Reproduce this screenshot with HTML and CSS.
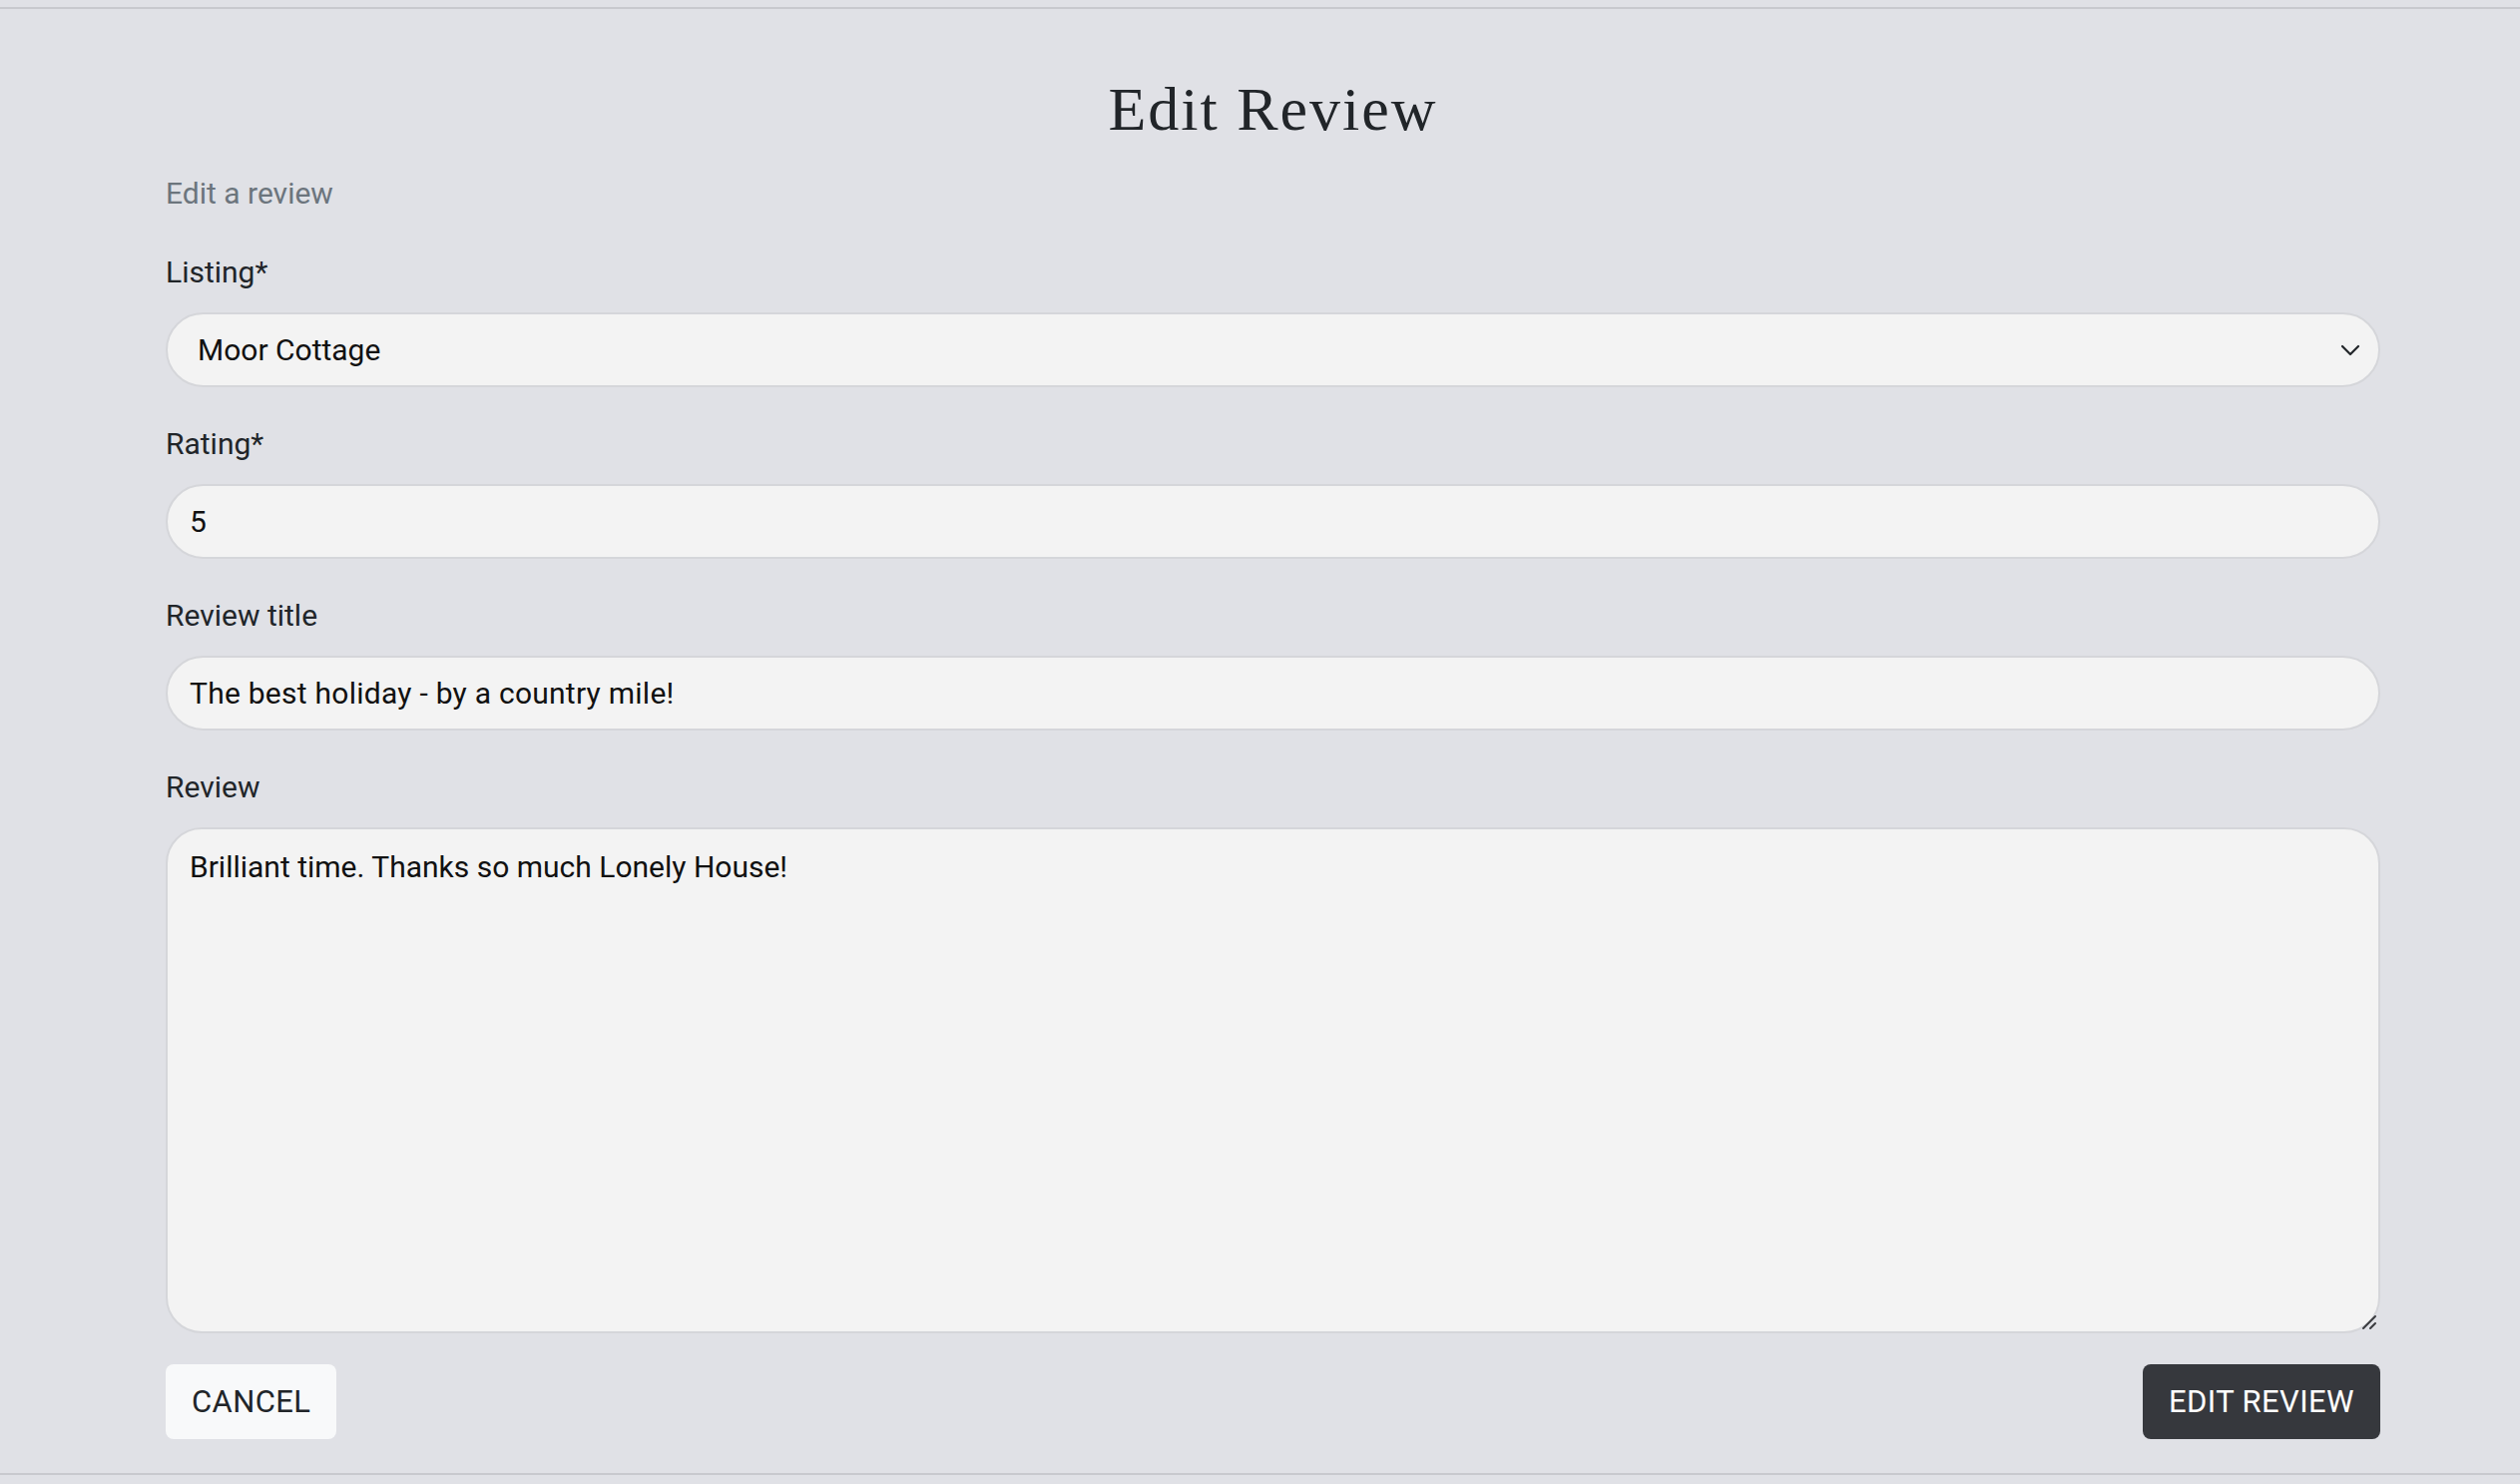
FILE: index.html
```html
<!DOCTYPE html>
<html lang="en">
<head>
<meta charset="utf-8">
<title>Edit Review</title>
<link rel="stylesheet" href="styles.css">
</head>
<body>
<div class="topbar"></div>
<main class="page">
  <h1 class="title">Edit Review</h1>
  <p class="lead">Edit a review</p>
  <form class="form">
    <div class="field">
      <label class="label" for="listing">Listing*</label>
      <div class="select-wrap">
        <select id="listing" class="control select">
          <option>Moor Cottage</option>
        </select>
        <svg class="chevron" width="20" height="12" viewBox="0 0 20 12"><path d="M2 2 L10 10 L18 2" fill="none" stroke="#212529" stroke-width="2.2" stroke-linecap="round" stroke-linejoin="round"/></svg>
      </div>
    </div>
    <div class="field">
      <label class="label" for="rating">Rating*</label>
      <input id="rating" class="control" type="text" value="5">
    </div>
    <div class="field">
      <label class="label" for="rtitle">Review title</label>
      <input id="rtitle" class="control" type="text" value="The best holiday - by a country mile!">
    </div>
    <div class="field">
      <label class="label" for="review">Review</label>
      <div class="area-wrap">
        <textarea id="review" class="control area">Brilliant time. Thanks so much Lonely House!</textarea>
        <svg class="grip" width="16" height="16" viewBox="0 0 16 16"><path d="M2 14 L14 2 M9 14 L14 9" fill="none" stroke="#3a3b3f" stroke-width="2" stroke-linecap="round"/></svg>
      </div>
    </div>
    <div class="actions">
      <button type="button" class="btn btn-light">CANCEL</button>
      <button type="submit" class="btn btn-dark">EDIT REVIEW</button>
    </div>
  </form>
</main>
<div class="bottombar"></div>
</body>
</html>
```

FILE: styles.css
```css
* { box-sizing: border-box; }
html, body { margin: 0; padding: 0; }
body {
  background: #e0e1e6;
  font-family: Roboto, "Noto Sans", sans-serif;
  color: #212529;
  height: 1487px;
  overflow: hidden;
}
.topbar {
  height: 9px;
  border-bottom: 2px solid #c8c9ce;
}
.page {
  width: 2219px;
  margin-left: 166px;
}
.title {
  margin: 0;
  padding-top: 65px;
  height: 162px;
  text-align: center;
  font-family: "Liberation Serif", "DejaVu Serif", serif;
  font-weight: 400;
  font-size: 62px;
  line-height: 70px;
  letter-spacing: 2px;
  color: #212529;
}
.lead {
  margin: 0;
  height: 78px;
  font-size: 30px;
  line-height: 46px;
  color: #6c757d;
  padding-top: 0;
}
.form { display: flex; flex-direction: column; }
.field {
  display: flex;
  flex-direction: column;
  margin-bottom: 33px;
}
.label {
  font-size: 30px;
  line-height: 48px;
  margin-bottom: 16px;
}
.control {
  display: block;
  width: 100%;
  height: 75px;
  background: #f3f3f3;
  border: 2px solid #d5d6da;
  border-radius: 40px;
  padding: 0 22px;
  font-family: inherit;
  font-size: 30px;
  color: #111;
  outline: none;
}
#rtitle { letter-spacing: 0.25px; }
.select-wrap { position: relative; }
.select {
  appearance: none;
  -webkit-appearance: none;
  padding-left: 30px;
}
.chevron {
  position: absolute;
  right: 20px;
  top: 32px;
}
.area-wrap { position: relative; }
.area {
  height: 507px;
  border-radius: 36px;
  padding: 14px 22px;
  line-height: 48px;
  resize: none;
}
.grip {
  position: absolute;
  right: 3px;
  bottom: 3px;
}
.actions {
  display: flex;
  justify-content: space-between;
  margin-top: -2px;
}
.btn {
  height: 75px;
  padding: 0 26px;
  border: none;
  border-radius: 8px;
  font-family: inherit;
  font-size: 31px;
  letter-spacing: 0.4px;
}
.btn-light { background: #f8f9fa; color: #212529; }
.btn-dark { background: #36383d; color: #fff; }
.bottombar {
  position: absolute;
  left: 0;
  right: 0;
  top: 1476px;
  border-top: 2px solid #c8c9ce;
}
```
